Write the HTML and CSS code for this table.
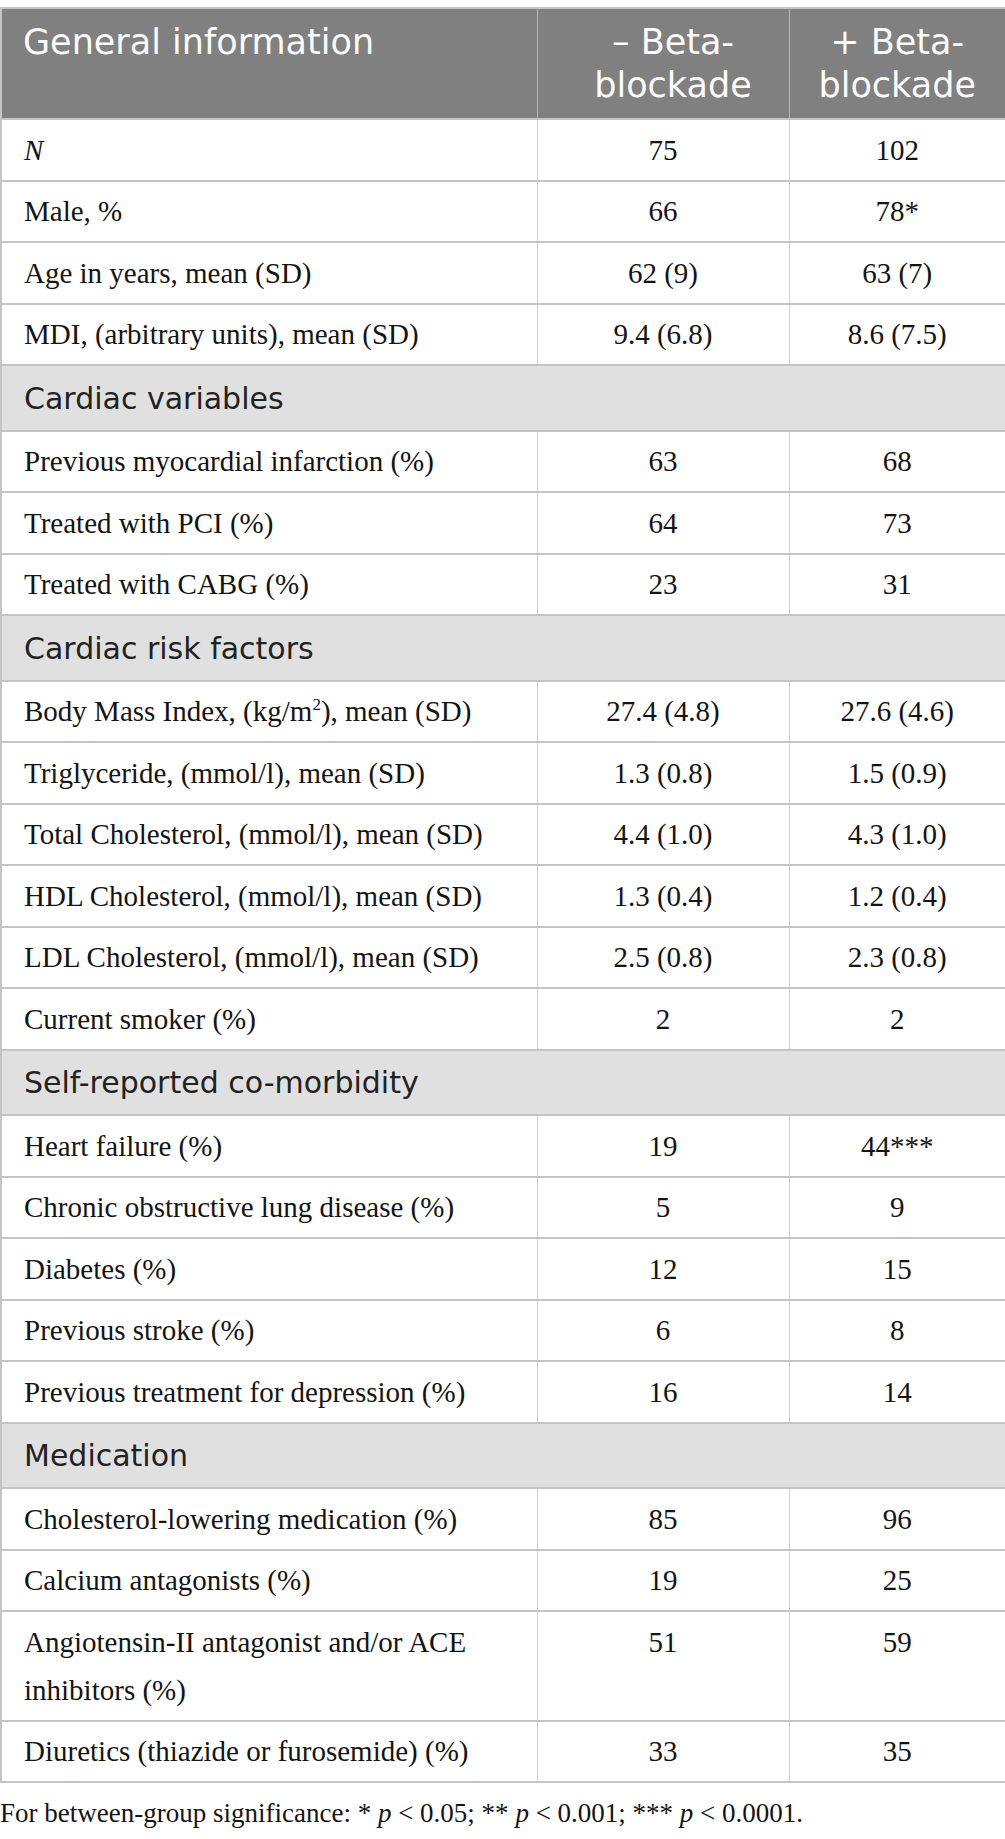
FILE: index.html
```html
<!DOCTYPE html>
<html lang="en">
<head>
<meta charset="utf-8">
<title>Table</title>
<link rel="stylesheet" href="styles.css">
</head>
<body>
<table class="data">
  <colgroup>
    <col class="c1">
    <col class="c2">
    <col class="c3">
  </colgroup>
  <thead>
    <tr>
      <th class="lbl">General information</th>
      <th class="mid">– Beta-blockade</th>
      <th>+ Beta-blockade</th>
    </tr>
  </thead>
  <tbody>
    <tr><td><i>N</i></td><td>75</td><td>102</td></tr>
    <tr><td>Male, %</td><td>66</td><td>78*</td></tr>
    <tr><td>Age in years, mean (SD)</td><td>62 (9)</td><td>63 (7)</td></tr>
    <tr><td>MDI, (arbitrary units), mean (SD)</td><td>9.4 (6.8)</td><td>8.6 (7.5)</td></tr>
    <tr class="sec"><td colspan="3">Cardiac variables</td></tr>
    <tr><td>Previous myocardial infarction (%)</td><td>63</td><td>68</td></tr>
    <tr><td>Treated with PCI (%)</td><td>64</td><td>73</td></tr>
    <tr><td>Treated with CABG (%)</td><td>23</td><td>31</td></tr>
    <tr class="sec"><td colspan="3">Cardiac risk factors</td></tr>
    <tr><td>Body Mass Index, (kg/m<sup>2</sup>), mean (SD)</td><td>27.4 (4.8)</td><td>27.6 (4.6)</td></tr>
    <tr><td>Triglyceride, (mmol/l), mean (SD)</td><td>1.3 (0.8)</td><td>1.5 (0.9)</td></tr>
    <tr><td>Total Cholesterol, (mmol/l), mean (SD)</td><td>4.4 (1.0)</td><td>4.3 (1.0)</td></tr>
    <tr><td>HDL Cholesterol, (mmol/l), mean (SD)</td><td>1.3 (0.4)</td><td>1.2 (0.4)</td></tr>
    <tr><td>LDL Cholesterol, (mmol/l), mean (SD)</td><td>2.5 (0.8)</td><td>2.3 (0.8)</td></tr>
    <tr><td>Current smoker (%)</td><td>2</td><td>2</td></tr>
    <tr class="sec"><td colspan="3">Self-reported co-morbidity</td></tr>
    <tr><td>Heart failure (%)</td><td>19</td><td>44***</td></tr>
    <tr><td>Chronic obstructive lung disease (%)</td><td>5</td><td>9</td></tr>
    <tr><td>Diabetes (%)</td><td>12</td><td>15</td></tr>
    <tr><td>Previous stroke (%)</td><td>6</td><td>8</td></tr>
    <tr><td>Previous treatment for depression (%)</td><td>16</td><td>14</td></tr>
    <tr class="sec"><td colspan="3">Medication</td></tr>
    <tr><td>Cholesterol-lowering medication (%)</td><td>85</td><td>96</td></tr>
    <tr><td>Calcium antagonists (%)</td><td>19</td><td>25</td></tr>
    <tr><td>Angiotensin-II antagonist and/or ACE inhibitors (%)</td><td>51</td><td>59</td></tr>
    <tr><td>Diuretics (thiazide or furosemide) (%)</td><td>33</td><td>35</td></tr>
  </tbody>
</table>
<p class="note">For between-group significance: * <i>p</i> &lt; 0.05; ** <i>p</i> &lt; 0.001; *** <i>p</i> &lt; 0.0001.</p>
</body>
</html>
```
FILE: styles.css
```css
html, body {
  margin: 0;
  padding: 0;
  background: #ffffff;
}

body {
  padding-top: 7px;
  font-family: "Liberation Serif", "Times New Roman", serif;
  color: #141414;
}

.data {
  width: 1005px;
  border-collapse: collapse;
  table-layout: fixed;
  border-top: 2px solid #c4c4c4;
  border-left: 2px solid #c4c4c4;
  border-right: 2px solid #c4c4c4;
}

.c1 { width: 536px; }
.c2 { width: 252px; }
.c3 { width: 217px; }

.data th {
  background: #808080;
  color: #fbfbfb;
  font-family: "DejaVu Sans", sans-serif;
  font-weight: normal;
  font-size: 35px;
  line-height: 43px;
  padding: 12px 16px 11px;
  text-align: center;
  vertical-align: top;
  border-bottom: 2px solid #c4c4c4;
  border-left: 1px solid #b4b4b4;
}

.data th.lbl {
  text-align: left;
  padding-left: 21px;
  border-left: none;
}

.data th.mid {
  padding-left: 30px;
  padding-right: 10px;
}

.data td {
  font-size: 29px;
  line-height: 48px;
  padding: 5.5px 22px 6px;
  text-align: center;
  vertical-align: top;
  border-bottom: 2px solid #c4c4c4;
  border-left: 1px solid #cfcfcf;
}

.data td:first-child {
  text-align: left;
  border-left: none;
}

.data sup {
  font-size: 17px;
  line-height: 0;
  vertical-align: 11px;
}

.data tr.sec td {
  background: #e1e0e1;
  font-family: "DejaVu Sans", sans-serif;
  font-size: 30px;
  line-height: 48px;
  padding: 8.5px 22px 7px;
  color: #222222;
}

.note {
  margin: 14px 0 0;
  font-size: 27px;
  line-height: 32px;
  color: #141414;
}
```
